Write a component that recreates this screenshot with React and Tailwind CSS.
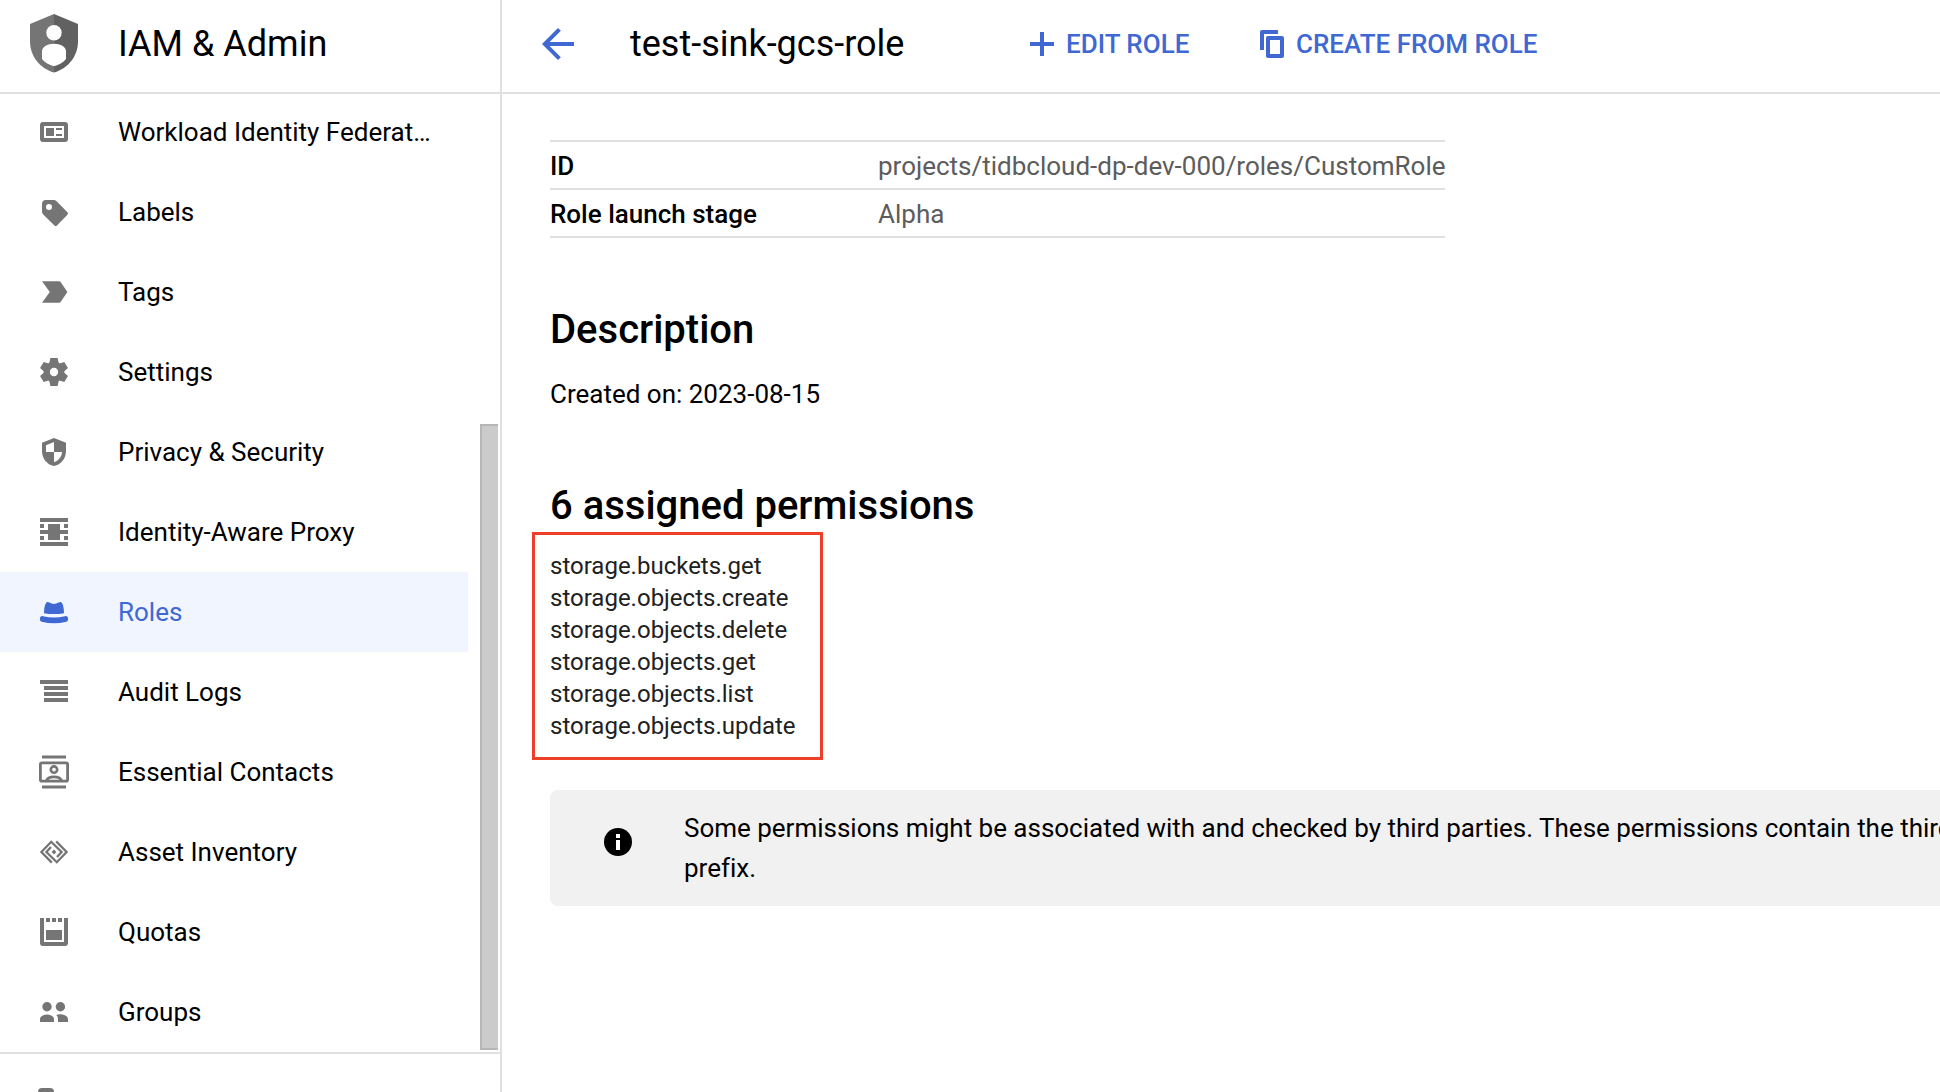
import React from "react";

function Icon({ children, className = "" }) {
  return (
    <svg viewBox="0 0 18 18" fill="currentColor" className={"block size-9 shrink-0 overflow-visible " + className}>
      {children}
    </svg>
  );
}

const gearTeeth = [0, 60, 120, 180, 240, 300];

const icons = {
  federation: (
    <>
      <path fillRule="evenodd" d="M3.500 4h11A1.500 1.500 0 0 1 16 5.500v7a1.500 1.500 0 0 1-1.500 1.500h-11A1.500 1.500 0 0 1 2 12.500v-7A1.500 1.500 0 0 1 3.500 4zM4 6v6h10V6z" />
      <path d="M5 7h4v4H5zM10 7h3v1h-3zM10 10h3v1h-3z" />
    </>
  ),
  label: (
    <path
      fillRule="evenodd"
      d="M5 3h3.900c.5 0 1 .2 1.400.6l5.300 5.400a1 1 0 0 1 0 1.500l-5 5.100a1 1 0 0 1-1.500 0L3.600 10.200C3.200 9.800 3 9.300 3 8.800V5a2 2 0 0 1 2-2zM6.500 5a1.500 1.500 0 1 0 0 3 1.500 1.500 0 0 0 0-3z"
    />
  ),
  tag: <path d="M3 3.600h8.500c.3 0 .6.200.8.400L15.700 9l-3.400 5c-.2.300-.5.400-.8.400H3L6.900 9z" />,
  settings: (
    <>
      <path
        fillRule="evenodd"
        d="M9 3.800a5.200 5.200 0 1 0 0 10.400A5.200 5.200 0 0 0 9 3.800zM9 6.900a2.100 2.100 0 1 1 0 4.200 2.100 2.100 0 0 1 0-4.200z"
      />
      {gearTeeth.map((a) => (
        <path key={a} transform={`rotate(${a} 9 9)`} d="M7.200 2h3.600l.6 2.900H6.600z" />
      ))}
    </>
  ),
  privacy: (
    <path
      fillRule="evenodd"
      d="M9 2l6 2.400v4.200c0 3.500-2.400 6.700-6 7.400-3.600-.7-6-3.900-6-7.400V4.400zM9 4L5 5.600V9h4zM9 9v5.100c2.300-.7 3.900-2.700 4-5.100z"
    />
  ),
  proxy: <path d="M2 2h14v2H2zM2 14h14v2H2zM2 8h14v2H2zM6 5h6v8H6zM2 5h2v2H2zM2 11h2v2H2zM14 5h2v2h-2zM14 11h2v2h-2z" />,
  roles: (
    <path d="M4 9.600C4 7.500 4.300 5.700 5 4.500c.4-.7 1.100-.6 1.700-.2 1.500.9 3.100.9 4.600 0 .6-.4 1.300-.5 1.700.2.700 1.200 1 3 1 5.100-3.200.6-6.800.6-10 0zM2 12.200c0-.8.600-1.300 1.500-1.100 3.700.9 7.300.9 11 0 .9-.2 1.500.3 1.500 1.100v.6c0 .6-.3 1-.9 1.100-4 1-8.200 1-12.200 0-.6-.1-.9-.5-.9-1.100z" />
  ),
  audit: <path d="M2 3h14v2H2zM4 6h12v2H4zM4 9h12v2H4zM4 12h12v2H4z" />,
  contacts: (
    <>
      <path d="M3 .75h12v1.500H3zM3 15.750h12v1.500H3z" />
      <rect x="2.200" y="4.400" width="13.600" height="9.200" rx=".7" fill="none" stroke="currentColor" strokeWidth="1.400" />
      <circle cx="9" cy="7.800" r="1.600" fill="none" stroke="currentColor" strokeWidth="1.300" />
      <path d="M5.100 13.600c.9-2.900 6.900-2.900 7.800 0" fill="none" stroke="currentColor" strokeWidth="1.400" />
    </>
  ),
  asset: (
    <>
      <g fill="none" stroke="currentColor" strokeWidth="1.150">
        <path d="M7.900 14.300L2.700 9l4.900-5.100L12.800 9l-2.300 2.500" />
        <path d="M10.100 3.700L15.300 9l-4.900 5.100L5.200 9l2.300-2.500" />
      </g>
      <path d="M9 7.800L10.200 9 9 10.200 7.800 9z" />
    </>
  ),
  quotas: (
    <>
      <path d="M2 2h2v12h10V2h2v12.600c0 .8-.6 1.400-1.400 1.400H3.400C2.600 16 2 15.400 2 14.600z" />
      <path d="M5 2h2v2H5zM8 2h2v2H8zM11 2h2v2h-2zM5 8h8v5H5z" />
    </>
  ),
  groups: (
    <>
      <circle cx="5.500" cy="6.350" r="2.350" />
      <circle cx="12.200" cy="6.350" r="2.350" />
      <path d="M2 14v-1.300c0-1.700 1.700-2.500 3.500-2.500S9 11 9 12.700V14zM11 14v-1.500c0-.8-.3-1.500-.9-2 2.300-.8 5.900-.1 5.900 2.200V14z" />
    </>
  ),
};

const navItems = [
  ["federation", "Workload Identity Federat…"],
  ["label", "Labels"],
  ["tag", "Tags"],
  ["settings", "Settings"],
  ["privacy", "Privacy & Security"],
  ["proxy", "Identity-Aware Proxy"],
  ["roles", "Roles"],
  ["audit", "Audit Logs"],
  ["contacts", "Essential Contacts"],
  ["asset", "Asset Inventory"],
  ["quotas", "Quotas"],
  ["groups", "Groups"],
];

const details = [
  ["ID", "projects/tidbcloud-dp-dev-000/roles/CustomRole"],
  ["Role launch stage", "Alpha"],
];

const permissions = [
  "storage.buckets.get",
  "storage.objects.create",
  "storage.objects.delete",
  "storage.objects.get",
  "storage.objects.list",
  "storage.objects.update",
];

function ProductShield() {
  return (
    <svg viewBox="0 0 48 59" className="block h-[59px] w-12 shrink-0">
      <path fill="#757575" d="M24 0L0 10v17.500C0 41.500 9.500 54.500 24 58.500z" />
      <path fill="#616161" d="M24 0l24 10v17.500c0 14-9.500 27-24 31z" />
      <circle cx="24" cy="18.700" r="7.700" fill="#fff" />
      <path fill="#fff" d="M12 37.500c0-5 5.500-7.800 12-7.800s12 2.800 12 7.800V45c-2.800 3.500-7 6-12 7.300C19 51 14.800 48.500 12 45z" />
    </svg>
  );
}

function Sidebar() {
  return (
    <aside className="flex h-full w-[502px] shrink-0 flex-col border-r-2 border-[#e0e0e0]">
      <header className="flex h-[94px] shrink-0 items-center border-b-2 border-[#e0e0e0] pl-[30px]">
        <div className="-mt-[5px]">
          <ProductShield />
        </div>
        <h1 className="-mt-1 pl-10 text-[36px] leading-none">IAM &amp; Admin</h1>
      </header>
      <div className="-mt-0.5 flex h-[960px] shrink-0 justify-between">
        <nav className="w-[468px]">
          {navItems.map(([icon, name]) => (
            <a
              key={name}
              className={
                "flex h-20 items-center gap-[46px] pl-9 text-[26px] leading-10 whitespace-nowrap " +
                (name === "Roles" ? "bg-[#f0f5ff] text-[#3f68d2]" : "text-black")
              }
            >
              <Icon className={name === "Roles" ? "" : "text-[#757575]"}>{icons[icon]}</Icon>
              <span>{name}</span>
            </a>
          ))}
        </nav>
        <div className="mt-[332px] mr-0.5 h-[626px] w-[18px] border-y-2 border-l-2 border-[#b6b6b6] bg-[#cbcbcb]" />
      </div>
      <div className="h-10 overflow-hidden border-t-2 border-[#e0e0e0] pt-[34px] pl-[38px]">
        <div className="h-10 w-4 rounded-t-[4px] bg-[#757575]" />
      </div>
    </aside>
  );
}

function Toolbar() {
  return (
    <header className="flex h-[94px] shrink-0 items-center border-b-2 border-[#e0e0e0] pb-1 pl-8 text-[#3f68d2]">
      <svg viewBox="0 0 24 24" fill="currentColor" className="block size-12 shrink-0">
        <path d="M20 11H7.830l5.590-5.590L12 4l-8 8 8 8 1.410-1.410L7.830 13H20v-2z" />
      </svg>
      <h2 className="w-[400px] pl-12 text-[36px] leading-none text-black">test-sink-gcs-role</h2>
      <a className="ml-12 flex items-center gap-3 text-[26px] leading-none font-medium">
        <svg viewBox="0 0 24 24" fill="currentColor" className="block size-6">
          <path d="M10 0h4v10h10v4H14v10h-4V14H0v-4h10z" />
        </svg>
        <span>EDIT ROLE</span>
      </a>
      <a className="ml-[70.6px] flex items-center gap-3 text-[26px] leading-none font-medium">
        <svg viewBox="0 0 24 28" fill="currentColor" className="block h-7 w-6">
          <path d="M2 0h16v4H4v16H0V2a2 2 0 0 1 2-2z" />
          <path fillRule="evenodd" d="M8 6h14a2 2 0 0 1 2 2v18a2 2 0 0 1-2 2H8a2 2 0 0 1-2-2V8a2 2 0 0 1 2-2zM10 10v14h10V10z" />
        </svg>
        <span>CREATE FROM ROLE</span>
      </a>
    </header>
  );
}

export default function App() {
  return (
    <div className="flex h-[1092px] w-[1940px] overflow-hidden bg-white font-['Roboto',sans-serif] text-black">
      <Sidebar />
      <div className="flex min-w-0 flex-1 flex-col">
        <Toolbar />
        <main className="flex flex-col items-start pt-[46px] pl-12">
          <dl className="w-[895px] border-t-2 border-[#e0e0e0] text-[26px]">
            {details.map(([term, value]) => (
              <div key={term} className="flex h-12 items-center border-b-2 border-[#e0e0e0] pt-0.5 leading-none">
                <dt className="w-[328px] shrink-0 font-medium">{term}</dt>
                <dd className="whitespace-nowrap text-[#5c5c5c]">{value}</dd>
              </div>
            ))}
          </dl>
          <h3 className="mt-[68px] text-[40px] leading-[48px] font-medium">Description</h3>
          <p className="mt-5 text-[26px] leading-10">Created on: 2023-08-15</p>
          <h3 className="mt-[68px] text-[40px] leading-[48px] font-medium">6 assigned permissions</h3>
          <ul className="mt-0.5 -ml-[18px] h-[228px] w-[291px] border-3 border-[#ee4029] pt-[15px] pl-[15px] text-[24px] leading-8 text-[#212121]">
            {permissions.map((p) => (
              <li key={p}>{p}</li>
            ))}
          </ul>
          <div className="mt-[30px] flex h-[116px] w-[1500px] items-start rounded-lg bg-[#f1f1f1] pl-[54px]">
            <svg viewBox="0 0 28 28" className="mt-[38px] block size-7 shrink-0">
              <circle cx="14" cy="14" r="14" />
              <path fill="#fff" d="M12 6h4v4h-4zM12 12h4v10h-4z" />
            </svg>
            <p className="mt-[18px] ml-[52px] text-[26px] leading-10 tracking-[-0.012px] whitespace-nowrap">
              Some permissions might be associated with and checked by third parties. These permissions contain the third
              <br />
              prefix.
            </p>
          </div>
        </main>
      </div>
    </div>
  );
}
